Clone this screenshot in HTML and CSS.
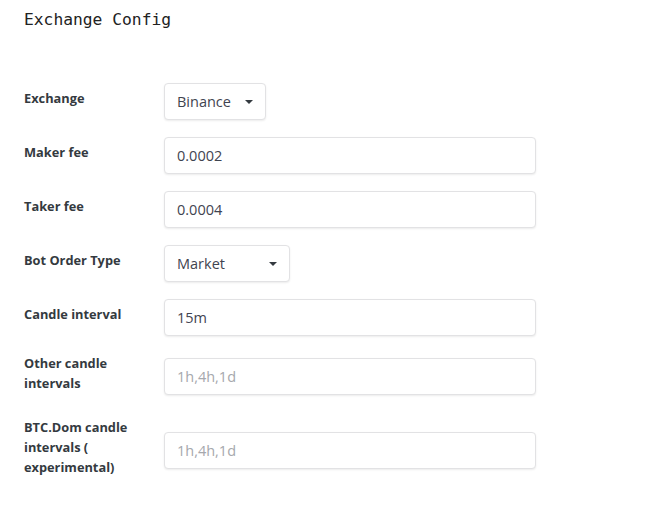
FILE: index.html
```html
<!DOCTYPE html>
<html>
<head>
<meta charset="utf-8">
<link rel="stylesheet" href="styles.css">
</head>
<body>
<div class="page">
  <h1 class="title">Exchange Config</h1>
  <form class="form">
    <div class="row">
      <label class="label">Exchange</label>
      <div class="select select-exchange"><span>Binance</span><span class="caret"></span></div>
    </div>
    <div class="row">
      <label class="label">Maker fee</label>
      <input class="input" type="text" value="0.0002">
    </div>
    <div class="row">
      <label class="label">Taker fee</label>
      <input class="input" type="text" value="0.0004">
    </div>
    <div class="row">
      <label class="label">Bot Order Type</label>
      <div class="select select-order"><span>Market</span><span class="caret"></span></div>
    </div>
    <div class="row">
      <label class="label">Candle interval</label>
      <input class="input" type="text" value="15m">
    </div>
    <div class="row">
      <label class="label">Other candle intervals</label>
      <input class="input" type="text" placeholder="1h,4h,1d">
    </div>
    <div class="row">
      <label class="label">BTC.Dom candle intervals ( experimental)</label>
      <input class="input" type="text" placeholder="1h,4h,1d">
    </div>
  </form>
</div>
</body>
</html>
```
FILE: styles.css
```css
* { box-sizing: border-box; }
html, body { margin: 0; padding: 0; background: #fff; }
body { font-family: "Open Sans", "Noto Sans", sans-serif; color: #343a40; }
.page { padding: 8px 0 0 24px; }
.title {
  margin: 0;
  font-family: "DejaVu Sans Mono", "Liberation Mono", monospace;
  font-weight: normal;
  font-size: 16.3px;
  line-height: 24px;
  color: #222;
}
.form { margin-top: 51px; }
.row {
  display: flex;
  align-items: center;
  margin-bottom: 17px;
}
.label {
  width: 140px;
  padding-right: 24px;
  padding-bottom: 7px;
  font-size: 12.8px;
  font-weight: 700;
  line-height: 20px;
  color: #343a40;
}
.input, .select {
  height: 37px;
  border: 1px solid #e2e2e4;
  border-radius: 4px;
  box-shadow: 0 1px 2px rgba(0,0,0,0.08);
  background: #fff;
  font-family: "Open Sans", "Noto Sans", sans-serif;
  font-size: 14.5px;
  color: #3f4450;
  padding: 0 12px;
  outline: none;
}
.input { width: 372px; }
.input::placeholder { color: #a6a8ad; }
.select {
  display: flex;
  align-items: center;
  justify-content: space-between;
}
.select-exchange { width: 102px; }
.select-order { width: 126px; }
.caret {
  width: 0;
  height: 0;
  border-left: 4px solid transparent;
  border-right: 4px solid transparent;
  border-top: 4.5px solid #343a40;
}
```
